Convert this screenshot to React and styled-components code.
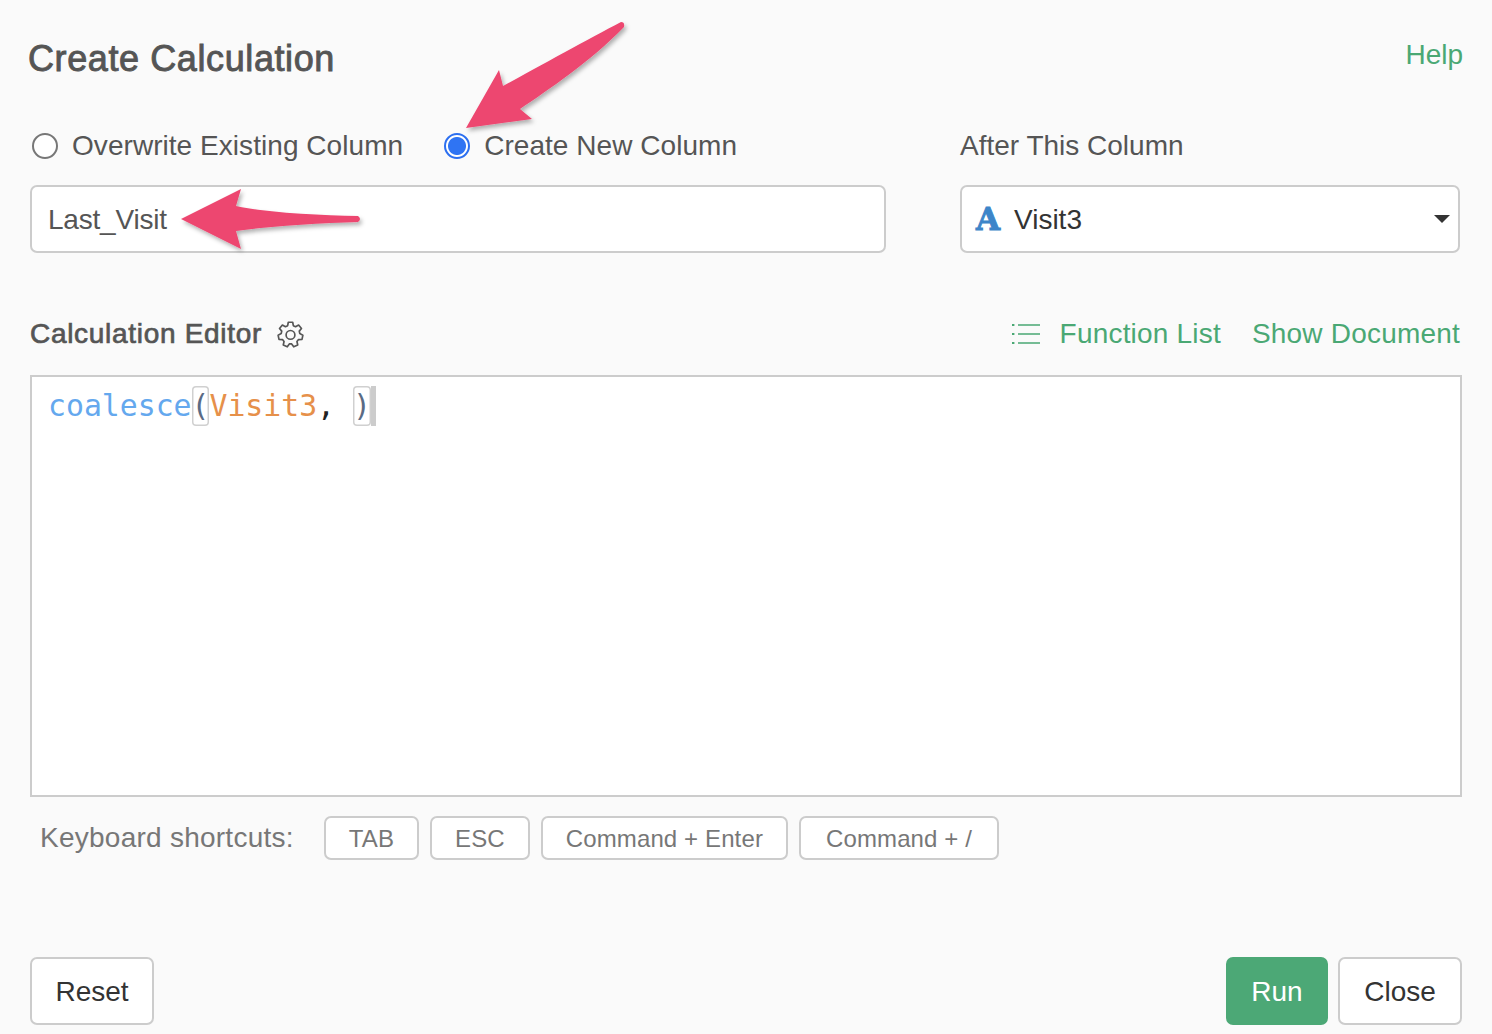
import React from "react";
import styled, { createGlobalStyle, css } from "styled-components";

const GlobalStyle = createGlobalStyle`
  html, body {
    margin: 0;
    padding: 0;
    background: #fafafa;
  }
  body {
    font-family: "Liberation Sans", Arial, sans-serif;
    color: #555;
  }
`;

const App = () => {
  return (
    <>
      <GlobalStyle />
      <Dialog>
        <Header>
          <Title>Create Calculation</Title>
          <HelpLink>Help</HelpLink>
        </Header>

        <FormGrid>
          <div>
            <RadioRow>
              <RadioOption>
                <Radio />
                Overwrite Existing Column
              </RadioOption>
              <RadioOption>
                <Radio $checked />
                Create New Column
              </RadioOption>
            </RadioRow>
            <NameInput>Last_Visit</NameInput>
          </div>
          <div>
            <FieldLabel>After This Column</FieldLabel>
            <Select>
              <TypeIcon>A</TypeIcon>
              <SelectValue>Visit3</SelectValue>
              <Caret />
            </Select>
          </div>
        </FormGrid>

        <EditorHeader>
          <EditorTitle>
            Calculation Editor
            <GearIcon />
          </EditorTitle>
          <EditorLinks>
            <FunctionLink>
              <ListIcon />
              Function List
            </FunctionLink>
            <span>Show Document</span>
          </EditorLinks>
        </EditorHeader>

        <Editor>
          <CodeLine>
            <Fn>coalesce</Fn>
            <Bracket>(</Bracket>
            <Arg>Visit3</Arg>,{" "}
            <Bracket>)</Bracket>
            <Cursor />
          </CodeLine>
        </Editor>

        <Shortcuts>
          <ShortcutLabel>Keyboard shortcuts:</ShortcutLabel>
          <Key>TAB</Key>
          <Key>ESC</Key>
          <Key>Command + Enter</Key>
          <Key $wide>Command + /</Key>
        </Shortcuts>

        <Footer>
          <Button>Reset</Button>
          <FooterRight>
            <Button $primary>Run</Button>
            <Button>Close</Button>
          </FooterRight>
        </Footer>

        <ArrowOverlay width="1492" height="300" viewBox="0 0 1492 300">
          <defs>
            <filter id="arrowShadow" x="-20%" y="-20%" width="140%" height="140%">
              <feDropShadow dx="2" dy="3" stdDeviation="2" floodColor="#000" floodOpacity="0.3" />
            </filter>
          </defs>
          <path
            d="M621 22 Q625 22 624 27 C590 62 548 90 520 109 L532 119 L466 128 L499 70 L503 86 C540 66 590 38 621 22 Z"
            fill="#ed4670"
            filter="url(#arrowShadow)"
          />
          <path
            d="M181 219 L241 189 L236 206 C270 213 320 215 358 216 Q362 219 358 222 C320 223 270 226 236 231 L241 249 Z"
            fill="#ed4670"
            filter="url(#arrowShadow)"
          />
        </ArrowOverlay>
      </Dialog>
    </>
  );
};

export default App;

const GearIcon = () => (
  <svg width="31" height="31" viewBox="0 0 24 24" fill="none" stroke="#555" strokeWidth="1.3" strokeLinejoin="round">
    <path d="M10.3 2.5h3.4l.5 2.7 1.7.8 2.4-1.3 2.2 2.6-1.7 2.1.4 1.9 2.4 1.2-.7 3.3-2.7.1-1.2 1.5.6 2.7-3.1 1.4-1.6-2.2h-1.8l-1.6 2.2-3.1-1.4.6-2.7-1.2-1.5-2.7-.1-.7-3.3 2.4-1.2.4-1.9-1.7-2.1 2.2-2.6 2.4 1.3 1.7-.8z" />
    <circle cx="12" cy="12.3" r="3.4" />
  </svg>
);

const ListIcon = () => (
  <svg width="30" height="22" viewBox="0 0 30 22" fill="none" stroke="#4aa874" strokeWidth="1.6">
    <path d="M7 2h22M7 11h22M7 20h22" />
    <path d="M1 2h2.4M1 11h2.4M1 20h2.4" strokeWidth="2.2" />
  </svg>
);

const Dialog = styled.div`
  position: relative;
  width: 1492px;
  height: 1034px;
  box-sizing: border-box;
  padding: 30px 30px 9px;
  display: flex;
  flex-direction: column;
  overflow: hidden;
`;

const Header = styled.div`
  display: flex;
  justify-content: space-between;
  align-items: center;
  height: 58px;
  margin-right: -1px;
  margin-left: -2px;
`;

const Title = styled.h1`
  margin: 0;
  font-size: 36px;
  font-weight: 400;
  -webkit-text-stroke: 0.9px #555;
  color: #555;
  letter-spacing: 0.6px;
`;

const HelpLink = styled.span`
  font-size: 28px;
  color: #4aa874;
  margin-top: -8px;
`;

const FormGrid = styled.div`
  display: grid;
  grid-template-columns: 856px 500px;
  column-gap: 74px;
  margin-top: 31px;
`;

const RadioRow = styled.div`
  display: flex;
  gap: 41px;
  height: 61px;
  padding-left: 2px;
`;

const RadioOption = styled.label`
  display: flex;
  align-items: center;
  gap: 14px;
  font-size: 28px;
  letter-spacing: 0.05px;
  color: #555;
  height: 54px;
`;

const Radio = styled.span`
  width: 26px;
  height: 26px;
  box-sizing: border-box;
  border-radius: 50%;
  background: #fff;
  border: 2px solid #777;
  flex: none;
  ${({ $checked }) =>
    $checked &&
    css`
      border: 2px solid #2c6ff0;
      background: radial-gradient(circle, #2f74f3 0 8.5px, #fff 9.5px);
    `}
`;

const FieldLabel = styled.div`
  font-size: 28px;
  color: #555;
  height: 61px;
  line-height: 54px;
`;

const fieldBox = css`
  box-sizing: border-box;
  height: 68px;
  background: #fff;
  border: 2px solid #ccc;
  border-radius: 7px;
  margin-top: 5px;
  display: flex;
  align-items: center;
`;

const NameInput = styled.div`
  ${fieldBox};
  padding: 2px 0 0 16px;
  font-size: 28px;
  letter-spacing: -0.2px;
  color: #555;
`;

const Select = styled.div`
  ${fieldBox};
  padding: 2px 8px 0 14px;
`;

const TypeIcon = styled.span`
  font-family: "DejaVu Serif", serif;
  font-weight: 700;
  font-size: 31px;
  color: #3d85c9;
  -webkit-text-stroke: 1px #3d85c9;
  width: 38px;
  margin-top: -2px;
`;

const SelectValue = styled.span`
  font-size: 28px;
  color: #333;
  flex: 1;
`;

const Caret = styled.span`
  width: 0;
  height: 0;
  border-left: 8px solid transparent;
  border-right: 8px solid transparent;
  border-top: 8px solid #333;
  margin-top: -2px;
`;

const EditorHeader = styled.div`
  display: flex;
  justify-content: space-between;
  align-items: center;
  margin-top: 60px;
  margin-right: 2px;
  height: 42px;
`;

const EditorTitle = styled.div`
  display: flex;
  align-items: center;
  gap: 13px;
  font-size: 28px;
  font-weight: 400;
  -webkit-text-stroke: 0.7px #555;
  color: #555;
  letter-spacing: 0.7px;
`;

const EditorLinks = styled.div`
  display: flex;
  align-items: center;
  gap: 31px;
  font-size: 28px;
  letter-spacing: 0.2px;
  color: #4aa874;
`;

const FunctionLink = styled.span`
  display: flex;
  align-items: center;
  gap: 19px;
`;

const Editor = styled.div`
  box-sizing: border-box;
  height: 422px;
  margin-top: 20px;
  background: #fff;
  border: 2px solid #ccc;
  padding: 9px 16px;
`;

const CodeLine = styled.div`
  font-family: "DejaVu Sans Mono", monospace;
  font-size: 29.8px;
  line-height: 40px;
  color: #222;
  display: flex;
  white-space: pre;
`;

const Fn = styled.span`
  color: #64a8ee;
`;

const Arg = styled.span`
  color: #e6904a;
`;

const Bracket = styled.span`
  color: #5a6b85;
  box-shadow: inset 0 0 0 1.5px #d0d0d0;
  border-radius: 4px;
`;

const Cursor = styled.span`
  width: 5px;
  height: 40px;
  background: #ccc;
`;

const Shortcuts = styled.div`
  display: flex;
  align-items: center;
  gap: 11px;
  margin-top: 19px;
  padding-left: 10px;
`;

const ShortcutLabel = styled.span`
  font-size: 28px;
  letter-spacing: 0.25px;
  color: #777;
  margin-right: 19px;
`;

const Key = styled.span`
  box-sizing: border-box;
  height: 44px;
  padding: 1px ${({ $wide }) => ($wide ? "25px" : "23px")} 0;
  background: #fff;
  border: 2px solid #ccc;
  border-radius: 7px;
  font-size: 24px;
  letter-spacing: 0.12px;
  color: #777;
  display: flex;
  align-items: center;
`;

const Footer = styled.div`
  display: flex;
  justify-content: space-between;
  margin-top: auto;
`;

const FooterRight = styled.div`
  display: flex;
  gap: 10px;
`;

const Button = styled.button`
  box-sizing: border-box;
  height: 68px;
  min-width: ${({ $primary }) => ($primary ? "102px" : "124px")};
  padding: 2px 23px 0;
  font-family: inherit;
  font-size: 28px;
  border-radius: 7px;
  border: 2px solid ${({ $primary }) => ($primary ? "#4ca876" : "#ccc")};
  background: ${({ $primary }) => ($primary ? "#4ca876" : "#fff")};
  color: ${({ $primary }) => ($primary ? "#fff" : "#333")};
`;

const ArrowOverlay = styled.svg`
  position: absolute;
  left: 0;
  top: 0;
  pointer-events: none;
`;
